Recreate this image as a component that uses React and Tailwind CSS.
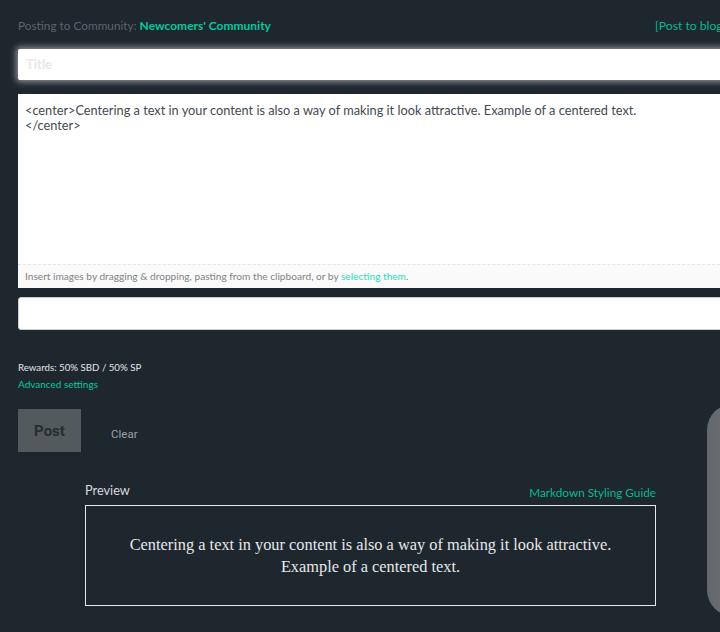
export default function App() {
  return (
    <div className="relative h-[632px] w-[720px] overflow-hidden bg-[#1e262e] font-['Lato','Noto_Sans',sans-serif]">
      <div className="w-[800px] pl-[18px] pt-[18px]">
        <div className="flex h-4 w-[782px] items-center justify-between text-[11.8px] leading-4">
          <span className="text-[#5f656b]">
            Posting to Community: <span className="text-[12px] font-bold text-[#07c8a0]">Newcomers' Community</span>
          </span>
          <span className="w-[145px] text-[12.2px] text-[#07b892]">[Post to blog]</span>
        </div>

        <div className="mt-[15px] flex h-[31px] items-center rounded-[2px] bg-white pl-2 text-[13px] font-bold text-[#e8e8e8] shadow-[0_0_6px_2px_rgba(255,255,255,0.5)]">
          Title
        </div>

        <div className="mt-[14px] flex h-[194px] flex-col bg-white">
          <div className="h-[170px] pl-[7px] pt-[9px] text-[12.75px] leading-[15px] text-[#444a50]">
            &lt;center&gt;Centering a text in your content is also a way of making it look attractive. Example of a centered text.
            <br />
            &lt;/center&gt;
          </div>
          <div className="flex flex-1 items-center border-t border-dashed border-[#e6e6e6] bg-[#fafafa] pl-[7px] text-[10.15px] text-[#808488]">
            <span>
              Insert images by dragging &amp; dropping, pasting from the clipboard, or by{" "}
              <span className="text-[#1fe0b8]">selecting them</span>.
            </span>
          </div>
        </div>

        <div className="mt-[9px] h-[33px] rounded-[3px] border border-[#c9cccf] bg-white" />

        <div className="mt-[30px] text-[9.7px] leading-[14px] text-[#e4e6e8]">Rewards: 50% SBD / 50% SP</div>
        <div className="mt-[3px] text-[10px] leading-[14px] text-[#07c8a0]">Advanced settings</div>

        <div className="mt-[18px] flex items-start">
          <button className="h-[43px] w-[63px] bg-[#535a5e] pt-px font-['Roboto',sans-serif] text-[15px] font-bold text-[#262d35]">
            Post
          </button>
          <span className="ml-[30px] mt-[17px] font-['Roboto',sans-serif] text-[11.5px] leading-4 text-[#9aa0a6]">Clear</span>
        </div>

        <div className="ml-[67px] mt-[29px] w-[571px]">
          <div className="flex items-end justify-between">
            <span className="mb-px text-[12.75px] leading-[18px] text-[#d8dade]">Preview</span>
            <span className="-mb-px text-[11.75px] leading-[16px] text-[#07b892]">Markdown Styling Guide</span>
          </div>
          <div className="mt-[5px] flex h-[101px] items-center justify-center border border-[#e8e8e8] px-10 text-center font-['Liberation_Serif',serif] text-[16.35px] leading-[22px] text-[#e6e8ea]">
            <p>
              Centering a text in your content is also a way of making it look attractive.
              <br />
              Example of a centered text.
            </p>
          </div>
        </div>
      </div>

      <div className="absolute left-[707px] top-[404px] h-[212px] w-[60px] rounded-[26px] bg-linear-to-r from-[#63686c] to-[#74797c]" />
    </div>
  );
}
